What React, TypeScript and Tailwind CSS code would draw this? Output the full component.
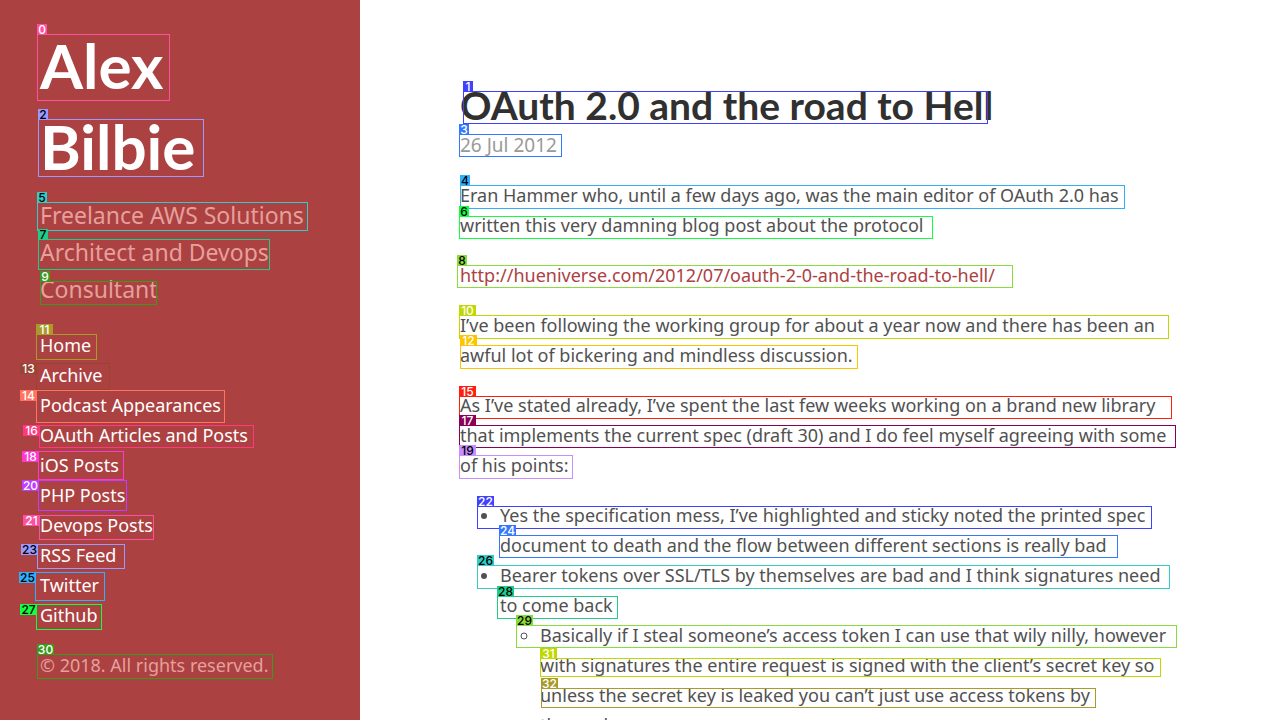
const navLinks = [
  "Home",
  "Archive",
  "Podcast Appearances",
  "OAuth Articles and Posts",
  "iOS Posts",
  "PHP Posts",
  "Devops Posts",
  "RSS Feed",
  "Twitter",
  "Github",
];

type Mark = { id: number; box: string; border: string; tag: string; side?: boolean };

const marks: Mark[] = [
  { id: 0, box: "left-[37px] top-[34px] w-[133px] h-[67px]", border: "border-[#ff4fa0]", tag: "bg-[#ff4fa0] text-white" },
  { id: 1, box: "left-[463px] top-[91px] w-[525px] h-[33px]", border: "border-[#4040ff]", tag: "bg-[#4040ff] text-white" },
  { id: 2, box: "left-[38px] top-[119px] w-[166px] h-[58px]", border: "border-[#9b98ff]", tag: "bg-[#9b98ff] text-black" },
  { id: 3, box: "left-[459px] top-[134px] w-[103px] h-[23px]", border: "border-[#3478ff]", tag: "bg-[#3478ff] text-white" },
  { id: 4, box: "left-[460px] top-[185px] w-[665px] h-[24px]", border: "border-[#2fb0ff]", tag: "bg-[#2fb0ff] text-black" },
  { id: 5, box: "left-[37px] top-[202px] w-[271px] h-[29px]", border: "border-[#33ccc8]", tag: "bg-[#33ccc8] text-black" },
  { id: 6, box: "left-[459px] top-[216px] w-[474px] h-[23px]", border: "border-[#10ff40]", tag: "bg-[#10ff40] text-black" },
  { id: 7, box: "left-[38px] top-[239px] w-[232px] h-[31px]", border: "border-[#1fcc8c]", tag: "bg-[#1fcc8c] text-black" },
  { id: 8, box: "left-[457px] top-[265px] w-[556px] h-[23px]", border: "border-[#88dd3a]", tag: "bg-[#88dd3a] text-black" },
  { id: 9, box: "left-[40px] top-[281px] w-[117px] h-[24px]", border: "border-[#3a9a1b]", tag: "bg-[#3a9a1b] text-white" },
  { id: 10, box: "left-[459px] top-[315px] w-[710px] h-[24px]", border: "border-[#c0d800]", tag: "bg-[#c0d800] text-white" },
  { id: 11, box: "left-[36px] top-[334px] w-[61px] h-[26px]", border: "border-[#aa9a2a]", tag: "bg-[#aa9a2a] text-white" },
  { id: 12, box: "left-[460px] top-[345px] w-[398px] h-[24px]", border: "border-[#ffc400]", tag: "bg-[#ffc400] text-white" },
  { id: 13, box: "left-[36px] top-[363px] w-[74px] h-[27px]", border: "border-[#984432]", tag: "bg-[#984432] text-white", side: true },
  { id: 14, box: "left-[36px] top-[390px] w-[189px] h-[33px]", border: "border-[#ff735f]", tag: "bg-[#ff735f] text-white", side: true },
  { id: 15, box: "left-[459px] top-[396px] w-[713px] h-[23px]", border: "border-[#ff1f0f]", tag: "bg-[#ff1f0f] text-white" },
  { id: 16, box: "left-[39px] top-[425px] w-[215px] h-[23px]", border: "border-[#ff3880]", tag: "bg-[#ff3880] text-white", side: true },
  { id: 17, box: "left-[459px] top-[425px] w-[717px] h-[23px]", border: "border-[#880058]", tag: "bg-[#880058] text-white" },
  { id: 18, box: "left-[38px] top-[451px] w-[86px] h-[29px]", border: "border-[#ff38d0]", tag: "bg-[#ff38d0] text-white", side: true },
  { id: 19, box: "left-[459px] top-[455px] w-[114px] h-[24px]", border: "border-[#c490ff]", tag: "bg-[#c490ff] text-black" },
  { id: 20, box: "left-[38px] top-[480px] w-[89px] h-[31px]", border: "border-[#c03cff]", tag: "bg-[#c03cff] text-white", side: true },
  { id: 21, box: "left-[39px] top-[515px] w-[115px] h-[25px]", border: "border-[#ff4fa0]", tag: "bg-[#ff4fa0] text-white", side: true },
  { id: 22, box: "left-[477px] top-[506px] w-[675px] h-[23px]", border: "border-[#4040ff]", tag: "bg-[#4040ff] text-white" },
  { id: 23, box: "left-[37px] top-[544px] w-[88px] h-[25px]", border: "border-[#9b98ff]", tag: "bg-[#9b98ff] text-black", side: true },
  { id: 24, box: "left-[499px] top-[535px] w-[619px] h-[23px]", border: "border-[#3478ff]", tag: "bg-[#3478ff] text-white" },
  { id: 25, box: "left-[35px] top-[572px] w-[70px] h-[29px]", border: "border-[#2fb0ff]", tag: "bg-[#2fb0ff] text-black", side: true },
  { id: 26, box: "left-[477px] top-[565px] w-[693px] h-[24px]", border: "border-[#33ccc8]", tag: "bg-[#33ccc8] text-black" },
  { id: 27, box: "left-[36px] top-[604px] w-[66px] h-[26px]", border: "border-[#10ff40]", tag: "bg-[#10ff40] text-black", side: true },
  { id: 28, box: "left-[497px] top-[596px] w-[121px] h-[23px]", border: "border-[#1fcc8c]", tag: "bg-[#1fcc8c] text-black" },
  { id: 29, box: "left-[516px] top-[625px] w-[661px] h-[23px]", border: "border-[#88dd3a]", tag: "bg-[#88dd3a] text-black" },
  { id: 30, box: "left-[37px] top-[654px] w-[236px] h-[25px]", border: "border-[#3a9a1b]", tag: "bg-[#3a9a1b] text-white" },
  { id: 31, box: "left-[540px] top-[658px] w-[621px] h-[19px]", border: "border-[#c0d800]", tag: "bg-[#c0d800] text-white" },
  { id: 32, box: "left-[541px] top-[688px] w-[555px] h-[20px]", border: "border-[#aa9a2a]", tag: "bg-[#aa9a2a] text-white" },
];

/** Numbered outline drawn over a line of text. */
function MarkBox({ mark }: { mark: Mark }) {
  const width = mark.id < 10 ? "w-[10px]" : "w-[17px]";
  const place = mark.side ? "right-full top-[-1px]" : "left-[-1px] bottom-full";
  return (
    <div className={`pointer-events-none absolute border ${mark.box} ${mark.border}`}>
      <span
        className={`absolute flex h-[11px] items-center justify-center font-['Inter',sans-serif] text-[12px] leading-[11px] font-medium ${width} ${place} ${mark.tag}`}
      >
        {mark.id}
      </span>
    </div>
  );
}

function Sidebar() {
  return (
    <aside className="w-[360px] shrink-0 bg-[#ac4142] px-10 pt-[25px] text-[#e5a09c]">
      <h1 className="font-['Lato',sans-serif] text-[62px] leading-[81px] font-bold text-white">
        Alex
        <br />
        Bilbie
      </h1>
      <p className="mt-[10px] text-[23px] leading-[37px]">
        Freelance AWS Solutions
        <br />
        Architect and Devops
        <br />
        Consultant
      </p>
      <nav className="mt-[22px] flex flex-col items-start text-white">
        {navLinks.map((label) => (
          <a key={label} href="#" className="hover:underline">
            {label}
          </a>
        ))}
      </nav>
      <p className="mt-5">© 2018. All rights reserved.</p>
    </aside>
  );
}

function Post() {
  return (
    <main className="min-w-0 flex-1 px-[100px] pt-20 text-[#515151]">
      <article className="flex flex-col gap-5 whitespace-nowrap">
        <header>
          <h2 className="font-['Lato',sans-serif] text-[39px] leading-[50px] font-bold text-[#303030]">
            OAuth 2.0 and the road to Hell
          </h2>
          <time dateTime="2012-07-26" className="block text-[19px] text-[#9a9a9a]">
            26 Jul 2012
          </time>
        </header>
        <p>
          Eran Hammer who, until a few days ago, was the main editor of OAuth 2.0 has
          <br />
          written this very damning blog post about the protocol
        </p>
        <p>
          <a href="http://hueniverse.com/2012/07/oauth-2-0-and-the-road-to-hell/" className="text-[#ac4142]">
            http://hueniverse.com/2012/07/oauth-2-0-and-the-road-to-hell/
          </a>
        </p>
        <p>
          I’ve been following the working group for about a year now and there has been an
          <br />
          awful lot of bickering and mindless discussion.
        </p>
        <p>
          As I’ve stated already, I’ve spent the last few weeks working on a brand new library
          <br />
          that implements the current spec (draft 30) and I do feel myself agreeing with some
          <br />
          of his points:
        </p>
        <ul className="list-disc pl-10">
          <li>
            Yes the specification mess, I’ve highlighted and sticky noted the printed spec
            <br />
            document to death and the flow between different sections is really bad
          </li>
          <li>
            Bearer tokens over SSL/TLS by themselves are bad and I think signatures need
            <br />
            to come back
            <ul className="list-[circle] pl-10">
              <li>
                Basically if I steal someone’s access token I can use that wily nilly, however
                <br />
                with signatures the entire request is signed with the client’s secret key so
                <br />
                unless the secret key is leaked you can’t just use access tokens by
                <br />
                themselves.
              </li>
            </ul>
          </li>
        </ul>
      </article>
    </main>
  );
}

export default function App() {
  return (
    <div className="relative flex h-screen overflow-hidden bg-white font-['Noto_Sans',sans-serif] text-[18px] leading-[30px]">
      <Sidebar />
      <Post />
      {marks.map((mark) => (
        <MarkBox key={mark.id} mark={mark} />
      ))}
    </div>
  );
}
